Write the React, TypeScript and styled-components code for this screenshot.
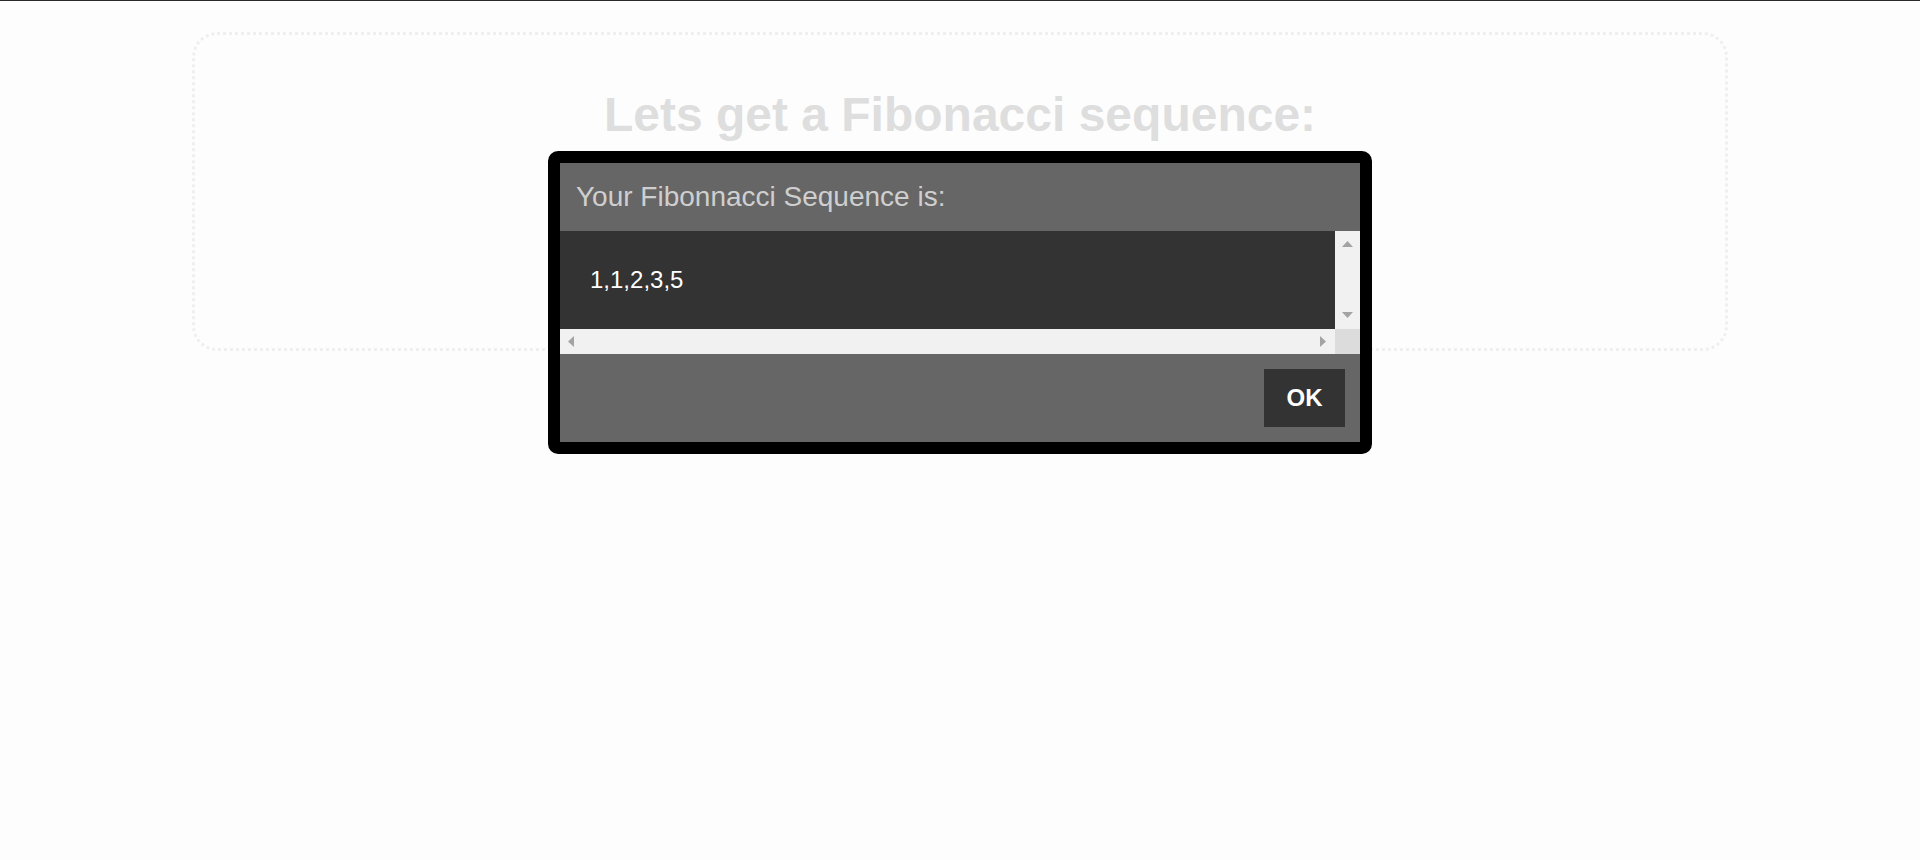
import React from "react";
import styled, { createGlobalStyle } from "styled-components";

const GlobalStyle = createGlobalStyle`
  html, body {
    margin: 0;
    padding: 0;
    background: #fdfdfd;
    font-family: "Liberation Sans", Arial, sans-serif;
  }
  * { box-sizing: border-box; }
`;

const Page = styled.div`
  min-height: 860px;
  border-top: 1px solid #2b2b2b;
  background: #fdfdfd;
`;

const Panel = styled.section`
  width: 80%;
  height: 319px;
  margin: 31px auto 0;
  padding: 20px;
  border: 3px dotted #efefef;
  border-radius: 25px;
`;

const Title = styled.h1`
  margin: 32px 0;
  text-align: center;
  font-size: 48px;
  font-weight: bold;
  line-height: normal;
  color: #dedede;
`;

const Dialog = styled.div`
  position: fixed;
  top: 151px;
  left: 50%;
  transform: translateX(-50%);
  width: 824px;
  border: 12px solid #000;
  border-radius: 10px;
  background: #666;
  display: flex;
  flex-direction: column;
`;

const DialogHeader = styled.div`
  height: 68px;
  padding: 18px 16px 0;
  font-size: 28px;
  line-height: normal;
  color: #cfcfcf;
`;

const ScrollFrame = styled.div`
  display: grid;
  grid-template-columns: 1fr 25px;
  grid-template-rows: 98px 25px;
`;

const Content = styled.div`
  background: #333;
  color: #fff;
  font-size: 24px;
  line-height: normal;
  padding: 35px 30px;
  white-space: nowrap;
`;

const Track = styled.div<{ $vertical?: boolean }>`
  background: #f1f1f1;
  display: flex;
  flex-direction: ${(p) => (p.$vertical ? "column" : "row")};
  justify-content: space-between;
  align-items: center;
  padding: ${(p) => (p.$vertical ? "10px 0 11px" : "0 9px 0 8px")};
`;

const Corner = styled.div`
  background: #dcdcdc;
`;

const Arrow = styled.svg`
  display: block;
  fill: #a3a3a3;
`;

const DialogFooter = styled.div`
  display: flex;
  justify-content: flex-end;
  padding: 15px;
`;

const OkButton = styled.button`
  width: 81px;
  height: 58px;
  border: none;
  background: #333;
  color: #fff;
  font-family: "Liberation Sans", Arial, sans-serif;
  font-size: 24px;
  font-weight: bold;
  padding: 0;
  cursor: pointer;
`;

const Up = () => (
  <Arrow width="11" height="6" viewBox="0 0 11 6">
    <polygon points="5.5,0 11,6 0,6" />
  </Arrow>
);
const Down = () => (
  <Arrow width="11" height="6" viewBox="0 0 11 6">
    <polygon points="0,0 11,0 5.5,6" />
  </Arrow>
);
const Left = () => (
  <Arrow width="6" height="11" viewBox="0 0 6 11">
    <polygon points="6,0 6,11 0,5.5" />
  </Arrow>
);
const Right = () => (
  <Arrow width="6" height="11" viewBox="0 0 6 11">
    <polygon points="0,0 6,5.5 0,11" />
  </Arrow>
);

export default function App() {
  const seq = [1, 1, 2, 3, 5];
  return (
    <>
      <GlobalStyle />
      <Page>
        <Panel>
          <Title>Lets get a Fibonacci sequence:</Title>
        </Panel>
        <Dialog role="dialog">
          <DialogHeader>Your Fibonnacci Sequence is:</DialogHeader>
          <ScrollFrame>
            <Content>{seq.join(",")}</Content>
            <Track $vertical>
              <Up />
              <Down />
            </Track>
            <Track>
              <Left />
              <Right />
            </Track>
            <Corner />
          </ScrollFrame>
          <DialogFooter>
            <OkButton>OK</OkButton>
          </DialogFooter>
        </Dialog>
      </Page>
    </>
  );
}
